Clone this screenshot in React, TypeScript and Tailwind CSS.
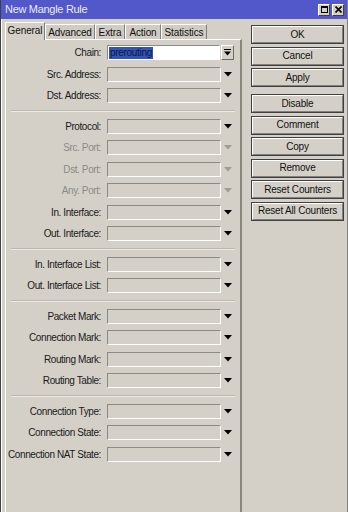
import React from "react";

type Row = { label: string; disabled?: boolean; chain?: boolean };

const groups: Row[][] = [
  [{ label: "Chain:", chain: true }, { label: "Src. Address:" }, { label: "Dst. Address:" }],
  [
    { label: "Protocol:" },
    { label: "Src. Port:", disabled: true },
    { label: "Dst. Port:", disabled: true },
    { label: "Any. Port:", disabled: true },
    { label: "In. Interface:" },
    { label: "Out. Interface:" },
  ],
  [{ label: "In. Interface List:" }, { label: "Out. Interface List:" }],
  [
    { label: "Packet Mark:" },
    { label: "Connection Mark:" },
    { label: "Routing Mark:" },
    { label: "Routing Table:" },
  ],
  [{ label: "Connection Type:" }, { label: "Connection State:" }, { label: "Connection NAT State:" }],
];

const buttons1 = ["OK", "Cancel", "Apply"];
const buttons2 = ["Disable", "Comment", "Copy", "Remove", "Reset Counters", "Reset All Counters"];

function Arrow({ disabled }: { disabled?: boolean }) {
  return (
    <svg width="8" height="5" viewBox="0 0 8 5" className="block">
      <polygon points="0,0 8,0 4,4.5" fill={disabled ? "#a09c94" : "#000"} />
    </svg>
  );
}

function FormRow({ row }: { row: Row }) {
  return (
    <div className="flex items-center h-[21.5px]">
      <div
        className={`w-[95px] text-right whitespace-nowrap tracking-[-0.4px] ${
          row.disabled ? "text-[#8c8a85]" : "text-[#1a1a1a]"
        }`}
      >
        {row.label}
      </div>
      <div className="ml-[6px] flex items-center">
        {row.chain ? (
          <>
            <div className="w-[113px] h-[15px] bg-white border border-[#8d8a84] border-r-white border-b-white flex items-center pl-[1px]">
              <span className="bg-[#3355b0] text-[#0a1650] leading-[12px] h-[12px] px-[1px] tracking-[-0.3px]">prerouting</span>
            </div>
            <div className="ml-[1px] w-[13px] h-[15px] border border-white border-r-[#6f6c66] border-b-[#6f6c66] flex items-center justify-center bg-[#d4d0c8]">
              <svg width="7" height="7" viewBox="0 0 7 7" className="block">
                <rect x="0" y="0" width="7" height="1" fill="#000" />
                <polygon points="0,2.5 7,2.5 3.5,6.5" fill="#000" />
              </svg>
            </div>
          </>
        ) : (
          <>
            <div className="w-[114px] h-[15px] bg-[#d4d0c8] border border-[#8d8a84] border-r-white border-b-white" />
            <div className="ml-[3px] w-[8px] flex justify-center">
              <Arrow disabled={row.disabled} />
            </div>
          </>
        )}
      </div>
    </div>
  );
}

function Btn({ label }: { label: string }) {
  return (
    <div className="h-[19px] w-[93px] border border-[#404040] bg-[#d4d0c8] flex">
      <div className="flex-1 border border-white border-r-[#808080] border-b-[#808080] flex items-center justify-center text-[#111] leading-none">
        {label}
      </div>
    </div>
  );
}

export default function App() {
  return (
    <div
      className="w-[348px] h-[512px] bg-[#d4d0c8] overflow-hidden flex flex-col border-l border-l-[#404040] border-r border-r-[#808080] text-[10px] tracking-[-0.2px]"
      style={{ fontFamily: '"Liberation Sans", Arial, sans-serif' }}
    >
      {/* title bar */}
      <div className="h-[19px] bg-[#5257c9] flex items-center pl-[4px] pr-[3px] shrink-0">
        <div className="text-[#ecebf7] text-[11px] tracking-[-0.3px] flex-1">New Mangle Rule</div>
        <div className="flex gap-[2px]">
          <div className="w-[12px] h-[12px] bg-[#d4d0c8] border border-white border-r-[#404040] border-b-[#404040] flex items-center justify-center">
            <div className="w-[7px] h-[7px] border border-black border-t-2" />
          </div>
          <div className="w-[12px] h-[12px] bg-[#d4d0c8] border border-white border-r-[#404040] border-b-[#404040] flex items-center justify-center">
            <svg width="7" height="7" viewBox="0 0 7 7" className="block">
              <path d="M0.5 0.5 L6.5 6.5 M6.5 0.5 L0.5 6.5" stroke="#000" strokeWidth="1.6" />
            </svg>
          </div>
        </div>
      </div>

      <div className="flex flex-1 min-h-0 border-l border-l-white">
        {/* left: tabs + panel */}
        <div className="w-[237px] ml-[3px] flex flex-col">
          <div className="flex items-end h-[19px] mt-[1px] tracking-[-0.1px]">
            <div className="h-[18px] w-[40px] border border-white border-b-0 border-r-[#808080] bg-[#d4d0c8] flex items-center justify-center text-[#111] relative z-10 -mb-[1px] pb-[2px]">
              General
            </div>
            {[
              ["Advanced", "w-[50px]"],
              ["Extra", "w-[30px]"],
              ["Action", "w-[36px]"],
              ["Statistics", "w-[46px]"],
            ].map(([t, w]) => (
              <div
                key={t}
                className={`h-[15px] ${w} border border-white border-b-0 border-r-[#808080] bg-[#d0ccc4] flex items-center justify-center text-[#111]`}
              >
                {t}
              </div>
            ))}
          </div>
          <div className="flex-1 border-l border-t border-l-white border-t-white border-r-2 border-r-[#8a8781] pt-[2px]">
            {groups.map((g, gi) => (
              <div key={gi}>
                {gi > 0 && (
                  <div className="h-[9px] flex items-center px-[5px]">
                    <div className="w-full border-t border-t-[#bcb8b0] border-b border-b-[#ebe9e4]" />
                  </div>
                )}
                {g.map((r) => (
                  <FormRow key={r.label} row={r} />
                ))}
              </div>
            ))}
          </div>
        </div>

        {/* right: buttons */}
        <div className="ml-[9px] pt-[6px] flex flex-col">
          <div className="flex flex-col gap-[2.5px]">
            {buttons1.map((b) => (
              <Btn key={b} label={b} />
            ))}
          </div>
          <div className="flex flex-col gap-[2.5px] mt-[7px]">
            {buttons2.map((b) => (
              <Btn key={b} label={b} />
            ))}
          </div>
        </div>
      </div>
    </div>
  );
}
